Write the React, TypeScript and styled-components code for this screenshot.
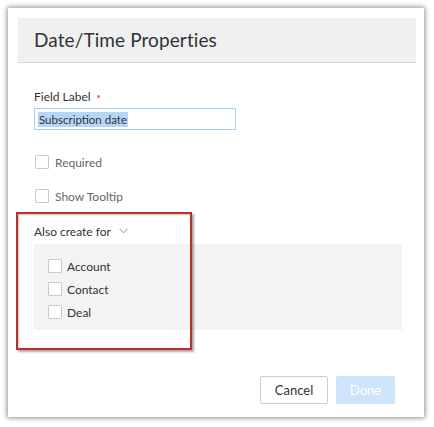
import React from "react";
import styled, { createGlobalStyle } from "styled-components";

const Global = createGlobalStyle`
  html, body { margin: 0; padding: 0; background: #ffffff; }
  body { font-family: Lato, "Open Sans", Arial, sans-serif; color: #333; }
  * { box-sizing: border-box; }
`;

const Page = styled.div`
  padding: 8px 10px 10px 8px;
  width: 434px;
  height: 427px;
`;

const Card = styled.div`
  position: relative;
  width: 416px;
  height: 409px;
  background: #fff;
  box-shadow: 0 0 5px 1px rgba(0, 0, 0, 0.45);
  padding: 10px 8px 13px 10px;
  display: flex;
  flex-direction: column;
`;

const Header = styled.div`
  height: 45px;
  background: #eff0f2;
  border-bottom: 1px solid #d5d8dd;
  display: flex;
  align-items: center;
  padding-left: 16px;
  padding-bottom: 2px;
  font-size: 19px;
  font-weight: 400;
  color: #333;
  letter-spacing: 0.1px;
`;

const Body = styled.div`
  padding-left: 16px;
  display: flex;
  flex-direction: column;
  flex: 1;
`;

const FieldLabel = styled.div`
  margin-top: 26px;
  height: 16px;
  line-height: 16px;
  font-size: 12px;
  color: #333;
  display: flex;
  align-items: center;
  gap: 6px;
`;

const Star = styled.span`
  width: 3px;
  height: 3px;
  border-radius: 50%;
  background: #ef6b6f;
  margin-bottom: 2px;
`;

const Input = styled.div`
  margin-top: 3px;
  width: 202px;
  height: 22px;
  border: 1px solid #a9d1f4;
  display: flex;
  align-items: center;
  padding-left: 3px;
  font-size: 11.5px;
  color: #333;
`;

const Selected = styled.span`
  background: #b4d6f8;
  line-height: 15px;
  padding: 0 1px;
`;

const CheckRow = styled.label<{ $top: number }>`
  margin-top: ${(p) => p.$top}px;
  height: 16px;
  display: flex;
  align-items: center;
  gap: 6px;
  font-size: 12px;
  color: #666;
  padding-left: 1px;
`;

const Box = styled.span`
  width: 14px;
  height: 14px;
  border: 1px solid #cacaca;
  background: #fff;
  border-radius: 1px;
  flex: none;
`;

const AlsoRow = styled.div`
  margin-top: 19px;
  height: 16px;
  display: flex;
  align-items: center;
  gap: 8px;
  font-size: 12px;
  color: #333;
`;

const SubPanel = styled.div`
  margin-top: 5px;
  width: 368px;
  height: 86px;
  background: #f3f3f3;
  padding: 14px 0 0 14px;
  display: flex;
  flex-direction: column;
  gap: 7px;
`;

const SubRow = styled.label`
  height: 16px;
  display: flex;
  align-items: center;
  gap: 5px;
  font-size: 12px;
  color: #333;
`;

const Footer = styled.div`
  margin-top: auto;
  display: flex;
  justify-content: flex-end;
  gap: 8px;
  padding-right: 21px;
`;

const Button = styled.button<{ $primary?: boolean }>`
  height: 28px;
  width: ${(p) => (p.$primary ? 59 : 68)}px;
  font-family: inherit;
  font-size: 13px;
  border-radius: 2px;
  border: 1px solid ${(p) => (p.$primary ? "#cde4fa" : "#cccccc")};
  background: ${(p) => (p.$primary ? "#cde4fa" : "#ffffff")};
  color: ${(p) => (p.$primary ? "#ffffff" : "#333")};
  padding: 0;
`;

const Annotation = styled.div`
  position: absolute;
  left: 8px;
  top: 204px;
  width: 176px;
  height: 138px;
  border: 2px solid #b5342a;
  box-shadow: 2px 2px 2px rgba(0, 0, 0, 0.35), inset 1px 1px 2px rgba(0, 0, 0, 0.25);
  pointer-events: none;
`;

const Chevron = () => (
  <svg width="9" height="6" viewBox="0 0 9 6" fill="none">
    <path d="M0.5 0.8 L4.5 4.8 L8.5 0.8" stroke="#8a8a8a" strokeWidth="1" />
  </svg>
);

export default function App() {
  return (
    <>
      <Global />
      <Page>
        <Card>
          <Header>Date/Time Properties</Header>
          <Body>
            <FieldLabel>
              Field Label <Star />
            </FieldLabel>
            <Input>
              <Selected>Subscription date</Selected>
            </Input>
            <CheckRow $top={24}>
              <Box /> Required
            </CheckRow>
            <CheckRow $top={18}>
              <Box /> Show Tooltip
            </CheckRow>
            <AlsoRow>
              Also create for <Chevron />
            </AlsoRow>
            <SubPanel>
              <SubRow>
                <Box /> Account
              </SubRow>
              <SubRow>
                <Box /> Contact
              </SubRow>
              <SubRow>
                <Box /> Deal
              </SubRow>
            </SubPanel>
            <Footer>
              <Button>Cancel</Button>
              <Button $primary>Done</Button>
            </Footer>
          </Body>
          <Annotation />
        </Card>
      </Page>
    </>
  );
}
